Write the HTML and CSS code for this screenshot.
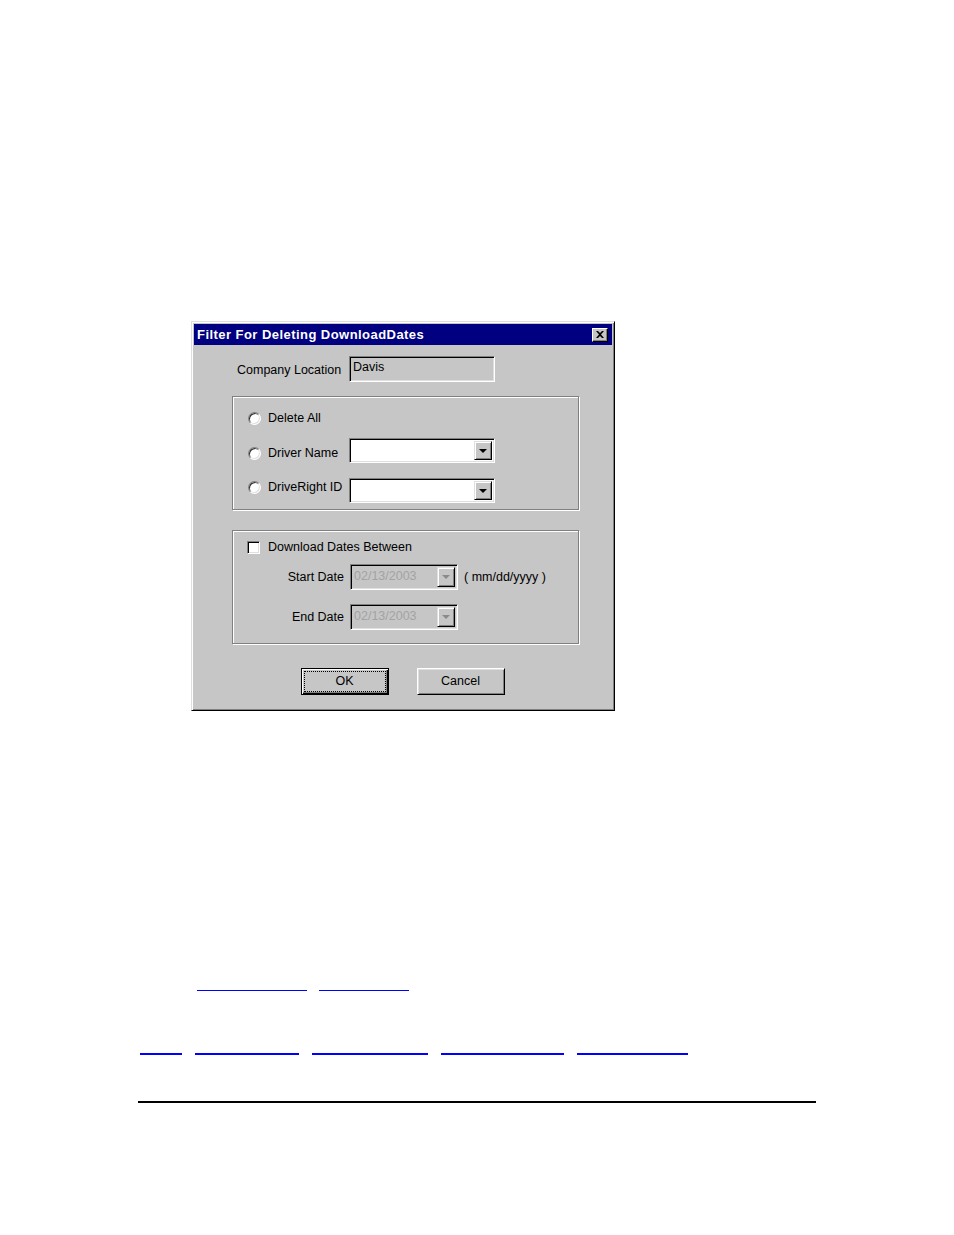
FILE: index.html
```html
<!DOCTYPE html>
<html lang="en">
<head>
<meta charset="utf-8">
<title>Filter For Deleting DownloadDates</title>
<link rel="stylesheet" href="styles.css">
</head>
<body>
<main class="page">
  <div class="dialog">
    <div class="titlebar">
      <span class="title">Filter For Deleting DownloadDates</span>
      <span class="close">
        <svg width="8" height="7" viewBox="0 0 8 7"><path d="M0 0h2l2 2 2-2h2L5 3.5 8 7H6L4 5 2 7H0l3-3.5z" fill="#000"/></svg>
      </span>
    </div>

    <div class="loc-row">
      <span class="loc-label">Company Location</span>
      <span class="field readonly">Davis</span>
    </div>

    <div class="group group-one">
      <div class="opt-row r1">
        <label class="opt"><span class="radio"></span><span>Delete All</span></label>
      </div>
      <div class="opt-row r2">
        <label class="opt"><span class="radio"></span><span>Driver Name</span></label>
        <span class="combo"><span class="combo-text"></span><span class="drop"><span class="arrow"></span></span></span>
      </div>
      <div class="opt-row r3">
        <label class="opt"><span class="radio"></span><span>DriveRight ID</span></label>
        <span class="combo"><span class="combo-text"></span><span class="drop"><span class="arrow"></span></span></span>
      </div>
    </div>

    <div class="group group-two">
      <label class="check-row"><span class="checkbox"></span><span>Download Dates Between</span></label>
      <div class="date-row d1">
        <span class="date-label">Start Date</span>
        <span class="combo date"><span class="combo-text dim">02/13/2003</span><span class="drop"><span class="arrow off"></span></span></span>
        <span class="hint">( mm/dd/yyyy )</span>
      </div>
      <div class="date-row d2">
        <span class="date-label">End Date</span>
        <span class="combo date"><span class="combo-text dim">02/13/2003</span><span class="drop"><span class="arrow off"></span></span></span>
      </div>
    </div>

    <div class="buttons">
      <span class="btn default"><span class="focus">OK</span></span>
      <span class="btn"><span class="focus plain">Cancel</span></span>
    </div>
  </div>

  <nav class="links links-a">
    <a class="lnk w110" href="#"></a>
    <a class="lnk w90" href="#"></a>
  </nav>

  <nav class="links links-b">
    <a class="lnk w42" href="#"></a>
    <a class="lnk w104" href="#"></a>
    <a class="lnk w116" href="#"></a>
    <a class="lnk w123" href="#"></a>
    <a class="lnk w111" href="#"></a>
  </nav>

  <hr class="rule">
</main>
</body>
</html>
```

FILE: styles.css
```css
* { box-sizing: border-box; }

html, body {
  margin: 0;
  padding: 0;
  background: #fff;
  font-family: "Liberation Sans", Arial, sans-serif;
}

.page {
  padding-top: 321px;
  height: 1235px;
}

/* ---------- dialog ---------- */
.dialog {
  margin-left: 191px;
  width: 424px;
  height: 390px;
  background: #c6c6c6;
  border: 1px solid;
  border-color: #dfdfdf #000 #000 #dfdfdf;
  box-shadow: inset 1px 1px 0 #fff, inset -1px -1px 0 #808080;
  padding: 2px;
  font-size: 12.5px;
  line-height: 15px;
  color: #000;
  display: flex;
  flex-direction: column;
  white-space: nowrap;
}

.titlebar {
  height: 21px;
  flex: none;
  background: #000080;
  display: flex;
  align-items: center;
  justify-content: space-between;
  padding: 0 4px 0 3px;
}

.title {
  color: #fff;
  font-weight: bold;
  font-size: 13px;
  letter-spacing: 0.45px;
}

.close {
  width: 16px;
  height: 14px;
  background: #c6c6c6;
  border: 1px solid;
  border-color: #fff #000 #000 #fff;
  box-shadow: inset -1px -1px 0 #808080;
  display: flex;
  align-items: center;
  justify-content: center;
  padding-right: 1px;
}

/* company location */
.loc-row {
  margin-top: 11px;
  padding-left: 43px;
  display: grid;
  grid-template-columns: 103px 146px;
  column-gap: 9px;
  align-items: center;
  flex: none;
}

.loc-label { padding-top: 2px; }

.field {
  height: 26px;
  border: 1px solid;
  border-color: #808080 #fff #fff #808080;
  box-shadow: inset 1px 1px 0 #000, inset -1px -1px 0 #dfdfdf;
  padding: 3px 3px;
  line-height: 15px;
}

.field.readonly { background: #c6c6c6; }

/* group boxes */
.group {
  margin-left: 38px;
  width: 347px;
  border: 1px solid #808080;
  box-shadow: inset 1px 1px 0 #fff, 1px 1px 0 #fff;
  flex: none;
}

.group-one {
  margin-top: 14px;
  height: 114px;
  padding-left: 15px;
}

.opt-row {
  height: 25px;
  display: grid;
  grid-template-columns: 101px 146px;
  align-items: start;
}
.r1 { margin-top: 8px; }
.r2 { margin-top: 8px; }
.r3 { margin-top: 15px; }

.opt {
  display: flex;
  align-items: center;
  gap: 7px;
  height: 15px;
}
.r1 .opt { margin-top: 6px; }
.r2 .opt { margin-top: 8px; }
.r3 .opt { margin-top: 2px; }

.radio {
  width: 13px;
  height: 13px;
  border-radius: 50%;
  background: #fff;
  border: 1px solid;
  border-color: #808080 #fff #fff #808080;
  box-shadow: inset 1px 1px 0 #303030, inset -1px -1px 0 #dfdfdf;
  flex: none;
}

.combo {
  height: 25px;
  background: #fff;
  border: 1px solid;
  border-color: #808080 #fff #fff #808080;
  box-shadow: inset 1px 1px 0 #000, inset -1px -1px 0 #dfdfdf;
  padding: 2px;
  display: flex;
}

.combo-text {
  flex: 1;
  padding: 1px 1px;
  line-height: 15px;
}

.combo-text.dim {
  color: #a3a3a3;
  padding-top: 2px;
}

.drop {
  width: 18px;
  background: #c6c6c6;
  border: 1px solid;
  border-color: #dfdfdf #000 #000 #dfdfdf;
  box-shadow: inset 1px 1px 0 #fff, inset -1px -1px 0 #808080;
  display: flex;
  align-items: center;
  justify-content: center;
}

.arrow {
  width: 0;
  height: 0;
  border-left: 4px solid transparent;
  border-right: 4px solid transparent;
  border-top: 4px solid #000;
}
.arrow.off { border-top-color: #8a8a8a; }

.combo.date {
  height: 26px;
  background: #c6c6c6;
}

/* group two */
.group-two {
  margin-top: 20px;
  height: 114px;
}

.check-row {
  margin-top: 8px;
  padding-left: 14px;
  height: 16px;
  display: flex;
  align-items: center;
  gap: 8px;
}

.checkbox {
  width: 13px;
  height: 13px;
  background: #fff;
  border: 1px solid;
  border-color: #808080 #fff #fff #808080;
  box-shadow: inset 1px 1px 0 #000, inset -1px -1px 0 #dfdfdf;
  flex: none;
}

.date-row {
  height: 26px;
  display: grid;
  grid-template-columns: 111px 108px auto;
  column-gap: 6px;
  align-items: center;
}
.d1 { margin-top: 9px; }
.d2 { margin-top: 14px; }

.date-label { text-align: right; }

/* buttons */
.buttons {
  margin-top: 24px;
  display: flex;
  justify-content: center;
  gap: 28px;
  padding-right: 1px;
  flex: none;
}

.btn {
  width: 88px;
  height: 27px;
  background: #c6c6c6;
  border: 1px solid;
  border-color: #fff #000 #000 #fff;
  box-shadow: inset 1px 1px 0 #dfdfdf, inset -1px -1px 0 #808080;
  padding: 2px;
  display: flex;
}

.btn.default {
  border-color: #000;
  box-shadow: inset 1px 1px 0 #fff, inset -1px -1px 0 #000, inset -2px -2px 0 #808080;
}

.focus {
  flex: 1;
  border: 1px dotted #000;
  display: flex;
  align-items: center;
  justify-content: center;
}
.focus.plain { border-color: transparent; }

/* ---------- links & rule ---------- */
.links {
  display: flex;
}

.links-a {
  margin-top: 279px;
  padding-left: 197px;
  gap: 12px;
}

.links-b {
  margin-top: 62px;
  padding-left: 140px;
  gap: 13px;
}

.lnk {
  display: block;
  height: 0;
  color: #00f;
}

.links-a .lnk { border-bottom: 1px solid #0000ff; }
.links-b .lnk { border-bottom: 2px solid #0000ff; }

.w42 { width: 42px; }
.w90 { width: 90px; }
.w104 { width: 104px; }
.w110 { width: 110px; }
.w111 { width: 111px; }
.w116 { width: 116px; }
.w123 { width: 123px; }

.rule {
  margin: 46px 0 0 138px;
  width: 678px;
  height: 2px;
  border: 0;
  background: #000;
}
```
